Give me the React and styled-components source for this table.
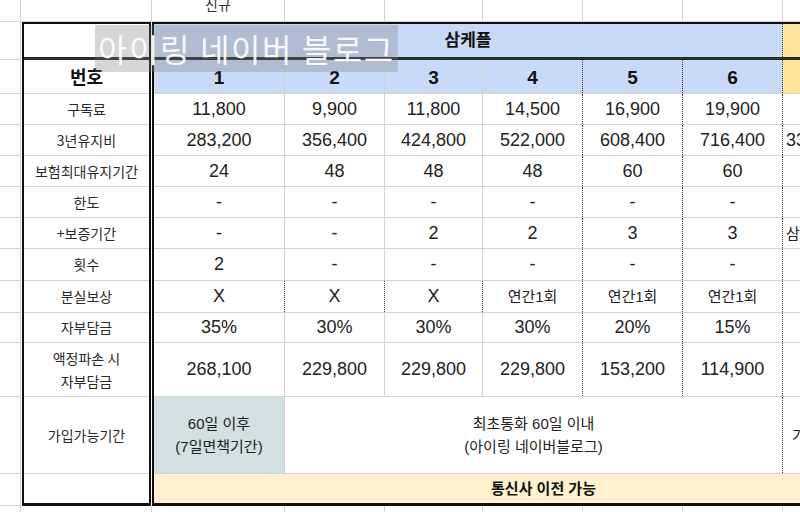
import React from "react";
import styled, { createGlobalStyle } from "styled-components";

const GlobalStyle = createGlobalStyle`
  html, body {
    margin: 0;
    padding: 0;
    background: #ffffff;
  }
  body {
    font-family: "Liberation Sans", "Noto Sans CJK KR", sans-serif;
    color: #1f1f1f;
  }
`;

const GRID = "#d3d3d3";
const DOT = "1px dotted #3a3a3a";
const BLUE = "#c9daf8";
const YELLOW = "#ffe599";
const CREAM = "#fff2cc";
const TEAL = "#d0e0e3";

// data block column widths (border included)
const COLS = [131, 100, 98, 100, 100, 100, 151];
const EDGE = [21, 131, 133, 100, 98, 100, 100, 100, 151, 100];

const Page = styled.div`
  position: relative;
  width: 800px;
  height: 512px;
  overflow: hidden;
  background: #fff;
`;

const EdgeRow = styled.div`
  display: flex;
  height: ${(p) => p.$h}px;
  box-sizing: border-box;
  border-bottom: ${(p) => (p.$line ? `1px solid ${GRID}` : "none")};
`;

const EdgeCell = styled.div`
  flex: none;
  width: ${(p) => p.$w}px;
  box-sizing: border-box;
  border-right: 1px solid ${GRID};
  display: flex;
  justify-content: center;
  align-items: flex-start;
  font-size: 14px;
  line-height: 14px;
  color: #333;
  overflow: hidden;
`;

const Nudge = styled.span`
  margin-top: -3px;
  font-family: "Noto Sans CJK KR", sans-serif;
`;

const Main = styled.div`
  display: flex;
  align-items: flex-start;
`;

const Gutter = styled.div`
  flex: none;
  width: 21px;
  margin-right: 1px;
  display: flex;
  flex-direction: column;
`;

const GutterCell = styled.div`
  height: ${(p) => p.$h}px;
  box-sizing: border-box;
  border-right: 1px solid ${GRID};
  border-bottom: 1px solid ${GRID};
`;

const LabelBlock = styled.div`
  flex: none;
  width: 129px;
  box-sizing: border-box;
  border: 2px solid #111;
  border-bottom-width: 3px;
  margin-right: 1px;
  display: flex;
  flex-direction: column;
`;

const LabelCell = styled.div`
  height: ${(p) => p.$h}px;
  box-sizing: border-box;
  border-bottom: ${(p) => (p.$thick ? "3px solid #2b2b2b" : p.$last ? "none" : `1px solid ${GRID}`)};
  display: flex;
  align-items: center;
  justify-content: center;
  text-align: center;
  white-space: pre-line;
  font-family: "Noto Sans CJK KR", sans-serif;
  font-size: ${(p) => (p.$bold ? 18 : 14)}px;
  font-weight: ${(p) => (p.$bold ? 700 : 400)};
  line-height: 23px;
  color: ${(p) => (p.$bold ? "#111" : "#2a2a2a")};
`;

const DataBlock = styled.div`
  flex: none;
  box-sizing: border-box;
  border: 2px solid #111;
  border-bottom-width: 3px;
  display: flex;
  flex-direction: column;
`;

const DataRow = styled.div`
  display: flex;
  height: ${(p) => p.$h}px;
  box-sizing: border-box;
  border-bottom: ${(p) => (p.$thick ? "3px solid #2b2b2b" : p.$last ? "none" : `1px solid ${GRID}`)};
`;

const Cell = styled.div`
  flex: none;
  width: ${(p) => p.$w}px;
  box-sizing: border-box;
  border-right: ${(p) => (p.$dotted ? DOT : `1px solid ${GRID}`)};
  background: ${(p) => p.$bg || "transparent"};
  display: flex;
  align-items: center;
  justify-content: ${(p) => (p.$left ? "flex-start" : "center")};
  padding-left: ${(p) => p.$pad || 0}px;
  padding-top: ${(p) => p.$drop || 0}px;
  text-align: center;
  white-space: pre-line;
  overflow: hidden;
  font-size: ${(p) => p.$size || 18}px;
  font-weight: ${(p) => (p.$bold ? 700 : 400)};
  line-height: 23px;
  color: ${(p) => (p.$bold ? "#111" : "#222")};
`;

const Watermark = styled.div`
  position: absolute;
  left: 95px;
  top: 25px;
  width: 303px;
  height: 47px;
  background: rgba(120, 120, 120, 0.3);
  color: rgba(255, 255, 255, 0.95);
  font-family: "Noto Sans CJK KR", sans-serif;
  font-size: 32px;
  line-height: 47px;
  padding-left: 3px;
  box-sizing: border-box;
  white-space: nowrap;
  overflow: hidden;
  letter-spacing: 1.6px;
`;

const rows = [
  { h: 31, label: "구독료", cells: ["11,800", "9,900", "11,800", "14,500", "16,900", "19,900", ""] },
  { h: 31, label: "3년유지비", cells: ["283,200", "356,400", "424,800", "522,000", "608,400", "716,400", "339,600"] },
  { h: 31, label: "보험최대유지기간", cells: ["24", "48", "48", "48", "60", "60", ""] },
  { h: 31, label: "한도", cells: ["-", "-", "-", "-", "-", "-", ""] },
  { h: 31, label: "+보증기간", cells: ["-", "-", "2", "2", "3", "3", "삼성케어플러스"] },
  { h: 32, label: "횟수", cells: ["2", "-", "-", "-", "-", "-", ""] },
  { h: 32, label: "분실보상", allDotted: true, cells: ["X", "X", "X", "연간1회", "연간1회", "연간1회", ""] },
  { h: 30, label: "자부담금", cells: ["35%", "30%", "30%", "30%", "20%", "15%", ""] },
  { h: 54, label: "액정파손 시\n자부담금", cells: ["268,100", "229,800", "229,800", "229,800", "153,200", "114,900", ""] },
];

const gutterHeights = [38, 34, ...rows.map((r) => r.h), 77, 32];

const isKorean = (t) => /[가-힣]/.test(t);

function ValueRow({ row }) {
  return (
    <DataRow $h={row.h}>
      {row.cells.map((v, i) => {
        const last = i === COLS.length - 1;
        const dotted = row.allDotted || i >= 3;
        return (
          <Cell
            key={i}
            $w={COLS[i]}
            $dotted={dotted && !last}
            $left={last}
            $pad={last ? 3 : 0}
            $size={isKorean(v) ? 15 : 18}
          >
            {v}
          </Cell>
        );
      })}
    </DataRow>
  );
}

export default function App() {
  const sum = (a, b) => COLS.slice(a, b).reduce((s, w) => s + w, 0);
  return (
    <Page>
      <GlobalStyle />
      <EdgeRow $h={22} $line>
        {EDGE.map((w, i) => (
          <EdgeCell key={i} $w={w}>
            {i === 2 && <Nudge>신규</Nudge>}
          </EdgeCell>
        ))}
      </EdgeRow>

      <Main>
        <Gutter>
          {gutterHeights.map((h, i) => (
            <GutterCell key={i} $h={h} />
          ))}
        </Gutter>

        <LabelBlock>
          <LabelCell $h={36} $thick />
          <LabelCell $h={34} $bold>번호</LabelCell>
          {rows.map((r) => (
            <LabelCell key={r.label} $h={r.h}>{r.label}</LabelCell>
          ))}
          <LabelCell $h={77}>가입가능기간</LabelCell>
          <LabelCell $h={29} $last />
        </LabelBlock>

        <DataBlock>
          <DataRow $h={36} $thick>
            <Cell $w={sum(0, 6)} $bg={BLUE} $dotted $bold $size={17}>삼케플</Cell>
            <Cell $w={COLS[6]} $bg={YELLOW} />
          </DataRow>
          <DataRow $h={34}>
            {[1, 2, 3, 4, 5, 6].map((n, i) => (
              <Cell key={n} $w={COLS[i]} $bg={BLUE} $dotted={i >= 3} $bold $size={19} $drop={2}>
                {n}
              </Cell>
            ))}
            <Cell $w={COLS[6]} $bg={YELLOW} />
          </DataRow>
          {rows.map((r) => (
            <ValueRow key={r.label} row={r} />
          ))}
          <DataRow $h={77}>
            <Cell $w={COLS[0]} $bg={TEAL} $size={15}>{"60일 이후\n(7일면책기간)"}</Cell>
            <Cell $w={sum(1, 6)} $dotted $size={15}>{"최초통화 60일 이내\n(아이링 네이버블로그)"}</Cell>
            <Cell $w={COLS[6]} $left $pad={9} $size={15}>가입 즉시</Cell>
          </DataRow>
          <DataRow $h={29} $last>
            <Cell $w={sum(0, 7)} $bg={CREAM} $bold $size={15}>통신사 이전 가능</Cell>
          </DataRow>
        </DataBlock>
      </Main>

      <EdgeRow $h={10}>
        {EDGE.map((w, i) => (
          <EdgeCell key={i} $w={w} />
        ))}
      </EdgeRow>

      <Watermark>아이링 네이버 블로그</Watermark>
    </Page>
  );
}
